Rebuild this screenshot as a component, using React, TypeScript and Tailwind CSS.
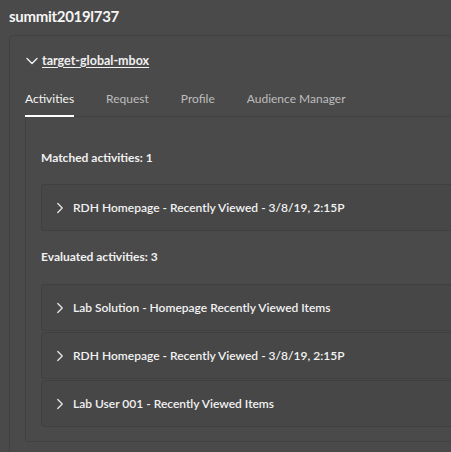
import { ChevronDown, ChevronRight } from "lucide-react"

const tabs = ["Activities", "Request", "Profile", "Audience Manager"]

const evaluated = [
  "Lab Solution - Homepage Recently Viewed Items",
  "RDH Homepage - Recently Viewed - 3/8/19, 2:15P",
  "Lab User 001 - Recently Viewed Items",
]

function ActivityRow({ name }: { name: string }) {
  return (
    <div className="flex items-center h-[47px] border border-[#404040] rounded-[3px] bg-[#474747] pl-[9px]">
      <ChevronRight size={18} strokeWidth={1.7} className="text-[#e6e6e6]" />
      <span className="ml-[4px] text-[12px] font-semibold text-[#f2f2f2] whitespace-nowrap">{name}</span>
    </div>
  )
}

export default function App() {
  return (
    <div
      className="w-[451px] h-[452px] overflow-hidden bg-[#4a4a4a] text-white"
      style={{ fontFamily: "Lato, 'Open Sans', sans-serif" }}
    >
      <h1 className="pl-[9px] pt-[6px] text-[15px] font-bold leading-[20px] tracking-[-0.3px] text-[#f5f5f5]">
        summit2019l737
      </h1>

      <div className="ml-[9px] mt-[9px] w-[460px] h-[430px] border border-[#414141] rounded-[4px] pl-[15px] pt-[15px]">
        <div className="flex items-center h-[20px]">
          <ChevronDown size={20} strokeWidth={1.7} className="text-[#eee] -ml-[3px]" />
          <span className="text-[12.5px] font-bold text-[#f0f0f0] underline underline-offset-2">
            target-global-mbox
          </span>
        </div>

        <div className="flex mt-[19px] text-[12px]">
          {tabs.map((t, i) => (
            <div
              key={t}
              className={
                i === 0
                  ? "pb-[7px] border-b-2 border-white text-[#f5f5f5] mr-[32px]"
                  : "pb-[7px] border-b-2 border-transparent text-[#bdbdbd] mr-[32px]"
              }
            >
              {t}
            </div>
          ))}
        </div>

        <div className="-mt-[1px] h-[326px] border border-[#414141] rounded-[3px] pl-[15px] pt-[33px]">
          <div className="text-[12px] font-bold text-[#f0f0f0] leading-[16px]">Matched activities: 1</div>
          <div className="mt-[18px] flex flex-col">
            <ActivityRow name="RDH Homepage - Recently Viewed - 3/8/19, 2:15P" />
          </div>
          <div className="mt-[18px] text-[12px] font-bold text-[#f0f0f0] leading-[16px]">Evaluated activities: 3</div>
          <div className="mt-[19px] flex flex-col gap-[1px]">
            {evaluated.map(e => (
              <ActivityRow key={e} name={e} />
            ))}
          </div>
        </div>
      </div>
    </div>
  )
}
